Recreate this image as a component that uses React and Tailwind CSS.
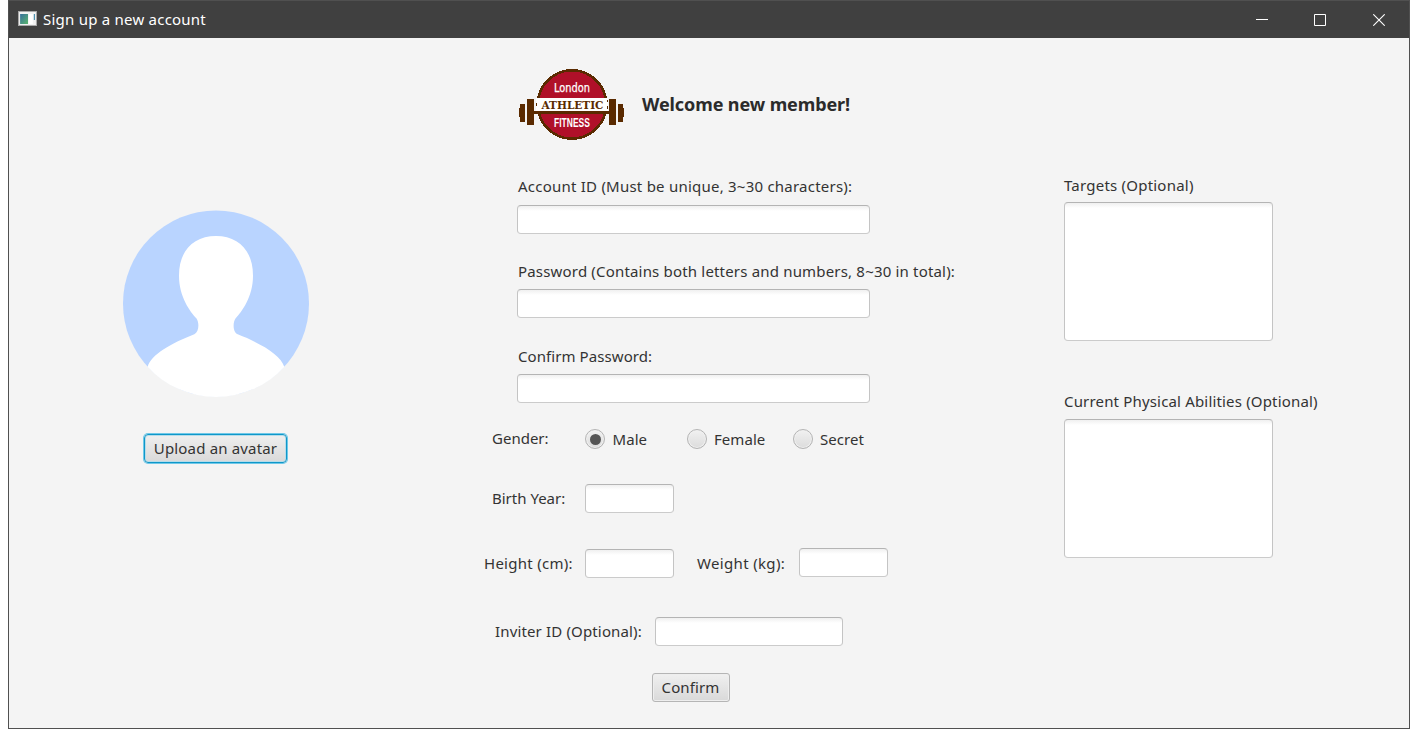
import React from "react";

const inputLook =
  "block rounded-[4px] border border-[#c4c4c4] border-t-[#b4b4b4] border-b-[#cbcbcb] bg-white bg-[linear-gradient(#f0f0f0,#fff_5px)] outline-none";

function Label({ className = "", children }) {
  return (
    <span className={`block h-5 shrink-0 whitespace-nowrap text-[15px] leading-5 text-[#333] ${className}`}>
      {children}
    </span>
  );
}

function Field({ className = "", type = "text" }) {
  return <input type={type} className={`h-[29px] shrink-0 ${inputLook} ${className}`} />;
}

function Radio({ checked, label, className = "" }) {
  return (
    <label className={`flex shrink-0 ${className}`}>
      <span className="flex size-5 items-center justify-center rounded-full border border-[#b4b4b4] bg-[linear-gradient(#f1f1f1,#dcdcdc)] shadow-[inset_0_0_0_1px_#f0f0f0]">
        {checked && <span className="size-[11px] rounded-full bg-[#555]" />}
      </span>
      <Label className="ml-[7.500px] tracking-[0.06px]">{label}</Label>
    </label>
  );
}

function Avatar() {
  return (
    <svg className="h-[187px] w-[186px]" viewBox="39 29 558 561">
      <circle cx="318" cy="309.500" r="279" fill="#b9d4ff" />
      <path
        fill="#fff"
        d="M318 107C385 107 429 150 429 226C429 290 395 334 377 354C368 366 368 396 383 402C450 428 513 463 523 500A279 279 0 0 1 113 500C123 463 185 428 253 402C268 394 268 366 259 354C241 334 207 290 207 226C207 150 251 107 318 107Z"
      />
    </svg>
  );
}

function Logo() {
  return (
    <svg className="h-[72px] w-[106px] shrink-0" viewBox="0 0 106 72" shapeRendering="crispEdges">
      <circle cx="53" cy="36.500" r="34.200" fill="#b01029" stroke="#5a2a00" strokeWidth="2.600" />
      <rect x="17" y="30" width="72" height="13" fill="#fff" />
      <g fill="#5a2a00">
        <rect x="15" y="43" width="75" height="3" />
        <rect x="8" y="31" width="7" height="26" />
        <rect x="1" y="36" width="5" height="18" />
        <rect x="0" y="40" width="1" height="9" />
        <rect x="90" y="31" width="7" height="26" />
        <rect x="99" y="36" width="5" height="18" />
        <rect x="104" y="40" width="1" height="9" />
        <rect x="17" y="35" width="1" height="3" />
        <rect x="88" y="32" width="1" height="2" />
        <rect x="88" y="38" width="1" height="3" />
      </g>
      <text x="35" y="24" fontSize="11.500" fill="#fff" stroke="#fff" strokeWidth=".25" fontFamily="DejaVu Sans" textLength="36" lengthAdjust="spacingAndGlyphs">London</text>
      <text x="22.500" y="41" fontSize="11.500" fontWeight="bold" fill="#5a2a00" fontFamily="DejaVu Serif" textLength="62" lengthAdjust="spacingAndGlyphs">ATHLETIC</text>
      <text x="35" y="59" fontSize="12.500" fontWeight="bold" fill="#fff" fontFamily="Liberation Sans" textLength="36" lengthAdjust="spacingAndGlyphs">FITNESS</text>
    </svg>
  );
}

function TitleBar() {
  return (
    <header className="flex h-[37px] shrink-0 items-center bg-[#404040] pl-[9px] text-white">
      <svg className="-mt-0.5 h-[15px] w-[19px]" viewBox="0 0 18 15" preserveAspectRatio="none">
        <defs>
          <linearGradient id="pane" x1="0" y1="0" x2="1" y2="1">
            <stop offset="0" stopColor="#356f9c" />
            <stop offset="1" stopColor="#5bb56e" />
          </linearGradient>
        </defs>
        <rect x=".5" y=".5" width="17" height="14" fill="#f1f1f1" stroke="#a8a8a8" />
        <rect x="2" y="3" width="7.500" height="10" fill="url(#pane)" />
        <rect x="10" y="3" width="4" height="10" fill="#fff" />
        <rect x="15" y="3" width="1" height="6" fill="#3a86a8" />
      </svg>
      <span className="-mt-0.5 ml-1.5 text-[15px] leading-5 tracking-[0.23px]">Sign up a new account</span>
      <div className="ml-auto flex items-center pr-[24px]">
        <svg className="size-3" viewBox="0 0 12 12"><path d="M0 5.500h12" stroke="#fff" /></svg>
        <svg className="ml-[46px] size-3" viewBox="0 0 12 12"><path d="M.5.500h11v11H.5z" fill="none" stroke="#fff" /></svg>
        <svg className="ml-[47px] size-3" viewBox="0 0 12 12"><path d="M.3.300l11.400 11.400M11.700.300L.3 11.700" fill="none" stroke="#fff" strokeWidth="1.100" /></svg>
      </div>
    </header>
  );
}

export default function App() {
  return (
    <div className="h-[737px] w-[1418px] overflow-hidden bg-white pl-2 font-['Noto_Sans',sans-serif]">
      <div className="flex h-[729px] w-[1402px] flex-col border border-[#505050] bg-[#f4f4f4]">
        <TitleBar />
        <main className="flex min-h-0 flex-1">
          <section className="flex w-[475px] shrink-0 flex-col pl-[114px] pt-[172px]">
            <Avatar />
            <button className="ml-[21px] mt-[37px] h-[29px] w-[143px] rounded-[4px] border border-[#0f97c9] bg-[linear-gradient(#efefef,#d9d9d9)] pb-0.5 text-[15px] leading-5 tracking-[0.17px] whitespace-nowrap text-[#333] shadow-[0_0_0_1px_#6fc8e8,inset_0_0_0_1px_#b5dcea]">
              Upload an avatar
            </button>
          </section>

          <section className="w-[580px] shrink-0 pt-[30px]">
            <div className="flex pl-[35px]">
              <Logo />
              <h1 className="ml-[17px] mt-6 h-6 whitespace-nowrap text-[18px] font-bold leading-6 tracking-[-0.1px] text-[#2b2b2b]">Welcome new member!</h1>
            </div>
            <div className="mt-9 pl-[33px]">
              <Label className="ml-px tracking-[0.23px]">Account ID (Must be unique, 3~30 characters):</Label>
              <Field className="mt-[9px] w-[353px]" />
              <Label className="ml-px mt-[27px] tracking-[0.18px]">Password (Contains both letters and numbers, 8~30 in total):</Label>
              <Field type="password" className="mt-2 w-[353px]" />
              <Label className="ml-px mt-7 tracking-[0.08px]">Confirm Password:</Label>
              <Field type="password" className="mt-2 w-[353px]" />
            </div>
            <div className="mt-[25px] flex pl-2">
              <Label className="w-[93px]">Gender:</Label>
              <div className="mt-px flex">
                <Radio checked label="Male" className="w-[101.500px]" />
                <Radio label="Female" className="w-[106px]" />
                <Radio label="Secret" />
              </div>
            </div>
            <div className="mt-[35px] flex pl-2">
              <Label className="mt-1 w-[93px]">Birth Year:</Label>
              <Field className="w-[89px]" />
            </div>
            <div className="mt-[35px] flex">
              <Label className="mt-[5px] w-[101px] tracking-[0.27px]">Height (cm):</Label>
              <Field className="mt-px w-[89px]" />
              <Label className="ml-[23px] mt-[5px] w-[102px] tracking-[0.34px]">Weight (kg):</Label>
              <Field className="w-[89px]" />
            </div>
            <div className="mt-[39px] flex pl-[11px]">
              <Label className="mt-[4px] w-[160px] tracking-[0.15px]">Inviter ID (Optional):</Label>
              <Field className="w-[188px]" />
            </div>
            <button className="ml-[167.500px] mt-[27px] block h-[29px] w-[78px] rounded-[3px] border border-[#b5b5b5] bg-[linear-gradient(#f0f0f0,#d9d9d9)] pb-0.5 text-[15px] leading-5 tracking-[0.1px] text-[#333] shadow-[inset_0_0_0_1px_#eeeeee]">
              Confirm
            </button>
          </section>

          <section className="flex-1 pt-[137px]">
            <Label className="tracking-[0.22px]">Targets (Optional)</Label>
            <textarea className={`mt-[7px] h-[139px] w-[209px] resize-none ${inputLook}`} />
            <Label className="mt-[50px] tracking-[0.17px]">Current Physical Abilities (Optional)</Label>
            <textarea className={`mt-2 h-[139px] w-[209px] resize-none ${inputLook}`} />
          </section>
        </main>
      </div>
    </div>
  );
}
